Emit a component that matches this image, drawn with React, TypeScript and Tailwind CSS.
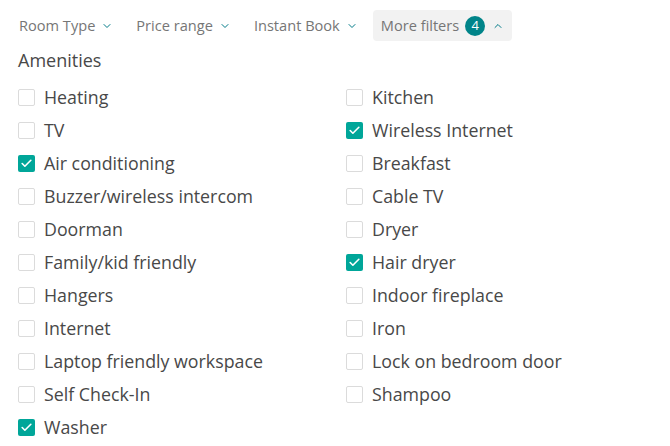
import { ChevronDown, ChevronUp, Check } from 'lucide-react';

const left = [
  { label: 'Heating', checked: false },
  { label: 'TV', checked: false },
  { label: 'Air conditioning', checked: true },
  { label: 'Buzzer/wireless intercom', checked: false },
  { label: 'Doorman', checked: false },
  { label: 'Family/kid friendly', checked: false },
  { label: 'Hangers', checked: false },
  { label: 'Internet', checked: false },
  { label: 'Laptop friendly workspace', checked: false },
  { label: 'Self Check-In', checked: false },
  { label: 'Washer', checked: true },
];

const right = [
  { label: 'Kitchen', checked: false },
  { label: 'Wireless Internet', checked: true },
  { label: 'Breakfast', checked: false },
  { label: 'Cable TV', checked: false },
  { label: 'Dryer', checked: false },
  { label: 'Hair dryer', checked: true },
  { label: 'Indoor fireplace', checked: false },
  { label: 'Iron', checked: false },
  { label: 'Lock on bedroom door', checked: false },
  { label: 'Shampoo', checked: false },
];

const Amenity = ({ label, checked }: { label: string; checked: boolean }) => (
  <div className="flex items-center h-[33px]">
    {checked ? (
      <span className="w-[17px] h-[17px] rounded-[2px] bg-[#00a699] flex items-center justify-center">
        <Check size={13} strokeWidth={3} className="text-white" />
      </span>
    ) : (
      <span className="w-[17px] h-[17px] rounded-[2px] border border-[#dbdbdb] bg-white" />
    )}
    <span className="ml-[9px] text-[17.8px] text-[#484848]">{label}</span>
  </div>
);

const FilterButton = ({ label }: { label: string }) => (
  <div className="flex items-center h-[31px] px-2 text-[14.6px] text-[#767676]">
    {label}
    <ChevronDown size={12} strokeWidth={2} className="ml-[6px] text-[#007a87]" />
  </div>
);

export default function App() {
  return (
    <div className="w-[670px] h-[446px] bg-white overflow-hidden" style={{ fontFamily: '"Open Sans", sans-serif' }}>
      <div className="flex items-center pt-[10px] pl-[11px] gap-[7px]">
        <FilterButton label="Room Type" />
        <FilterButton label="Price range" />
        <FilterButton label="Instant Book" />
        <div className="flex items-center h-[31px] pl-2 pr-[8px] rounded bg-[#f2f2f2] text-[14.6px] text-[#767676]">
          More filters
          <span className="ml-[6px] w-5 h-5 rounded-full bg-[#008489] text-white text-[13px] flex items-center justify-center">4</span>
          <ChevronUp size={12} strokeWidth={2} className="ml-[7px] text-[#007a87]" />
        </div>
      </div>
      <div className="pl-[18px] mt-[7px]">
        <div className="text-[18px] text-[#484848] leading-[24px]">Amenities</div>
        <div className="grid grid-cols-[328px_1fr] mt-[9px]">
          <div className="flex flex-col">
            {left.map((a) => (
              <Amenity key={a.label} {...a} />
            ))}
          </div>
          <div className="flex flex-col">
            {right.map((a) => (
              <Amenity key={a.label} {...a} />
            ))}
          </div>
        </div>
      </div>
    </div>
  );
}
